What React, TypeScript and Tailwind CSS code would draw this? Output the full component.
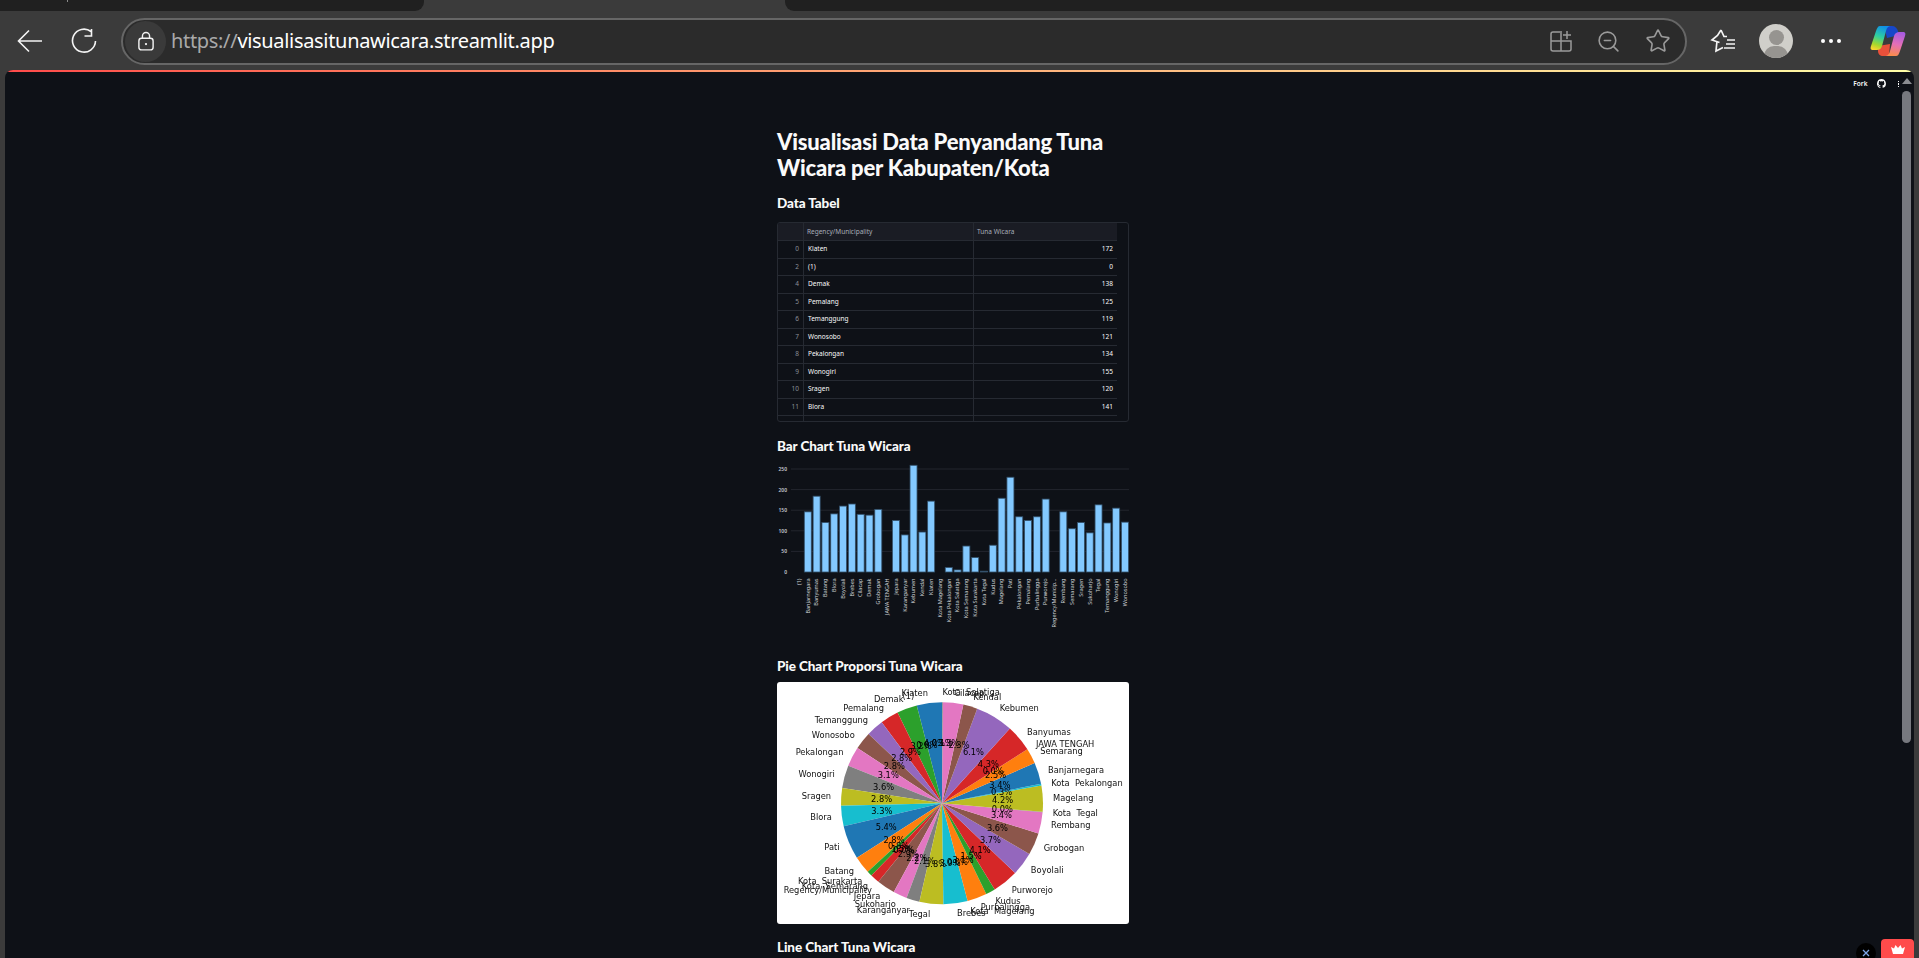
import { Star, ZoomOut } from 'lucide-react';

// [label, value] in the order the pie runs, counter-clockwise from the top
const pieData: [string, number][] = [
  ['Klaten', 172], ['(1)', 0], ['Demak', 138], ['Pemalang', 125], ['Temanggung', 119], ['Wonosobo', 121],
  ['Pekalongan', 134], ['Wonogiri', 155], ['Sragen', 120], ['Blora', 141], ['Pati', 230], ['Batang', 120],
  ['Kota  Surakarta', 35], ['Kota  Semarang', 63], ['Regency/Municipality', 0], ['Jepara', 125], ['Sukoharjo', 95],
  ['Karanganyar', 90], ['Tegal', 163], ['Brebes', 165], ['Kota  Magelang', 0], ['Purbalingga', 134], ['Kudus', 65],
  ['Purworejo', 177], ['Boyolali', 160], ['Grobogan', 152], ['Rembang', 146], ['Kota  Tegal', 2], ['Magelang', 179],
  ['Kota  Pekalongan', 11], ['Banjarnegara', 146], ['Semarang', 105], ['JAWA TENGAH', 0], ['Banyumas', 184],
  ['Kebumen', 259], ['Kendal', 97], ['Cilacap', 140], ['Kota  Salatiga', 5],
];

const tab10 = ['#1f77b4', '#ff7f0e', '#2ca02c', '#d62728', '#9467bd', '#8c564b', '#e377c2', '#7f7f7f', '#bcbd22', '#17becf'];

const barData: [string, number][] = [
  ['(1)', 0], ['Banjarnegara', 146], ['Banyumas', 184], ['Batang', 120], ['Blora', 141], ['Boyolali', 160],
  ['Brebes', 165], ['Cilacap', 140], ['Demak', 138], ['Grobogan', 152], ['JAWA TENGAH', 0], ['Jepara', 125],
  ['Karanganyar', 90], ['Kebumen', 259], ['Kendal', 97], ['Klaten', 172], ['Kota Magelang', 0], ['Kota Pekalongan', 11],
  ['Kota Salatiga', 5], ['Kota Semarang', 63], ['Kota Surakarta', 35], ['Kota Tegal', 2], ['Kudus', 65], ['Magelang', 179],
  ['Pati', 230], ['Pekalongan', 134], ['Pemalang', 125], ['Purbalingga', 134], ['Purworejo', 177], ['Regency/Municip...', 0],
  ['Rembang', 146], ['Semarang', 105], ['Sragen', 120], ['Sukoharjo', 95], ['Tegal', 163], ['Temanggung', 119],
  ['Wonogiri', 155], ['Wonosobo', 121],
];

const rows: [number, string, number][] = [
  [0, 'Klaten', 172], [2, '(1)', 0], [4, 'Demak', 138], [5, 'Pemalang', 125], [6, 'Temanggung', 119],
  [7, 'Wonosobo', 121], [8, 'Pekalongan', 134], [9, 'Wonogiri', 155], [10, 'Sragen', 120], [11, 'Blora', 141],
];

function PieChart() {
  const cx = 165;
  const cy = 121.3;
  const r = 101;
  const total = pieData.reduce((s, d) => s + d[1], 0);
  let angle = 90;
  const slices = pieData.map(([label, v], i) => {
    const sweep = (v / total) * 360;
    const a0 = (angle * Math.PI) / 180;
    const a1 = ((angle + sweep) * Math.PI) / 180;
    const mid = (a0 + a1) / 2;
    angle += sweep;
    const large = sweep > 180 ? 1 : 0;
    const d = `M${cx} ${cy}L${cx + r * Math.cos(a0)} ${cy - r * Math.sin(a0)}A${r} ${r} 0 ${large} 0 ${cx + r * Math.cos(a1)} ${cy - r * Math.sin(a1)}Z`;
    return { label, d, mid, color: tab10[i % 10], pct: `${((v / total) * 100).toFixed(1)}%` };
  });
  return (
    <svg width="352" height="242" className="block blur-[0.35px]" fontFamily="'DejaVu Sans', sans-serif" fontSize="8.3">
      {slices.map((s) => (
        <path key={s.label} d={s.d} fill={s.color} />
      ))}
      {slices.map((s) => (
        <text
          key={s.label}
          x={cx + 1.1 * r * Math.cos(s.mid)}
          y={cy - 1.1 * r * Math.sin(s.mid)}
          textAnchor={Math.cos(s.mid) > 0 ? 'start' : 'end'}
          dominantBaseline="central"
          fill="#111111"
          className="whitespace-pre"
        >
          {s.label}
        </text>
      ))}
      {slices.map((s) => (
        <text
          key={s.label + 'pct'}
          x={cx + 0.6 * r * Math.cos(s.mid)}
          y={cy - 0.6 * r * Math.sin(s.mid)}
          textAnchor="middle"
          dominantBaseline="central"
          fill="#000000"
        >
          {s.pct}
        </text>
      ))}
    </svg>
  );
}

function BarChart() {
  const base = 114;
  const unit = 0.412;
  return (
    <svg width="353" height="170" className="block" fontFamily="'Noto Sans', sans-serif">
      {[0, 50, 100, 150, 200, 250].map((t) => (
        <g key={t}>
          {t > 0 && <line x1="14" x2="352" y1={base - t * unit} y2={base - t * unit} stroke="#23262e" strokeWidth="1" />}
          <text x="10" y={base - t * unit} textAnchor="end" dominantBaseline="central" fontSize="5" fontWeight="600" fill="#c4c6cb">
            {t}
          </text>
        </g>
      ))}
      {barData.map(([label, v], i) => {
        const x = 22 + i * 8.81;
        return (
          <g key={label}>
            {v > 0 && (
              <rect x={x - 3.5} y={base - v * unit} width="7" height={v * unit} fill="#83c9ff" stroke="#33506a" strokeWidth="0.8" />
            )}
            <text
              transform={`translate(${x + 1.8} ${base + 6.5}) rotate(-90)`}
              textAnchor="end"
              fontSize="5.5"
              fill="#cfd1d6"
            >
              {label}
            </text>
          </g>
        );
      })}
    </svg>
  );
}

function DataTable() {
  return (
    <div className="h-[200px] w-[352px] overflow-hidden rounded-[3px] border border-[#262a32] text-[6.5px] text-[#fafafa]">
      <div className="flex h-[18px] w-[339px] border-b border-[#262a32] bg-[#1a1c24] text-[#a8adb8]">
        <div className="w-[26px] border-r border-[#262a32]" />
        <div className="flex w-[170px] items-center border-r border-[#262a32] pl-[3px]">Regency/Municipality</div>
        <div className="flex w-[143px] items-center pl-[3px]">Tuna Wicara</div>
      </div>
      {rows.map(([idx, name, value]) => (
        <div key={idx} className="flex h-[17.5px] w-[339px] border-b border-[#262a32]">
          <div className="flex w-[26px] items-center justify-end border-r border-[#262a32] pr-[4px] text-[#8b8f98]">{idx}</div>
          <div className="flex w-[170px] items-center border-r border-[#262a32] pl-[4px]">{name}</div>
          <div className="flex w-[143px] items-center justify-end pr-[4px]">{value}</div>
        </div>
      ))}
      <div className="flex h-[6px] w-[339px]">
        <div className="w-[26px] border-r border-[#262a32]" />
        <div className="w-[170px] border-r border-[#262a32]" />
      </div>
    </div>
  );
}

function Copilot() {
  return (
    <svg width="36" height="34" viewBox="0 0 36 34">
      <defs>
        <linearGradient id="cpL" x1="0.6" y1="0" x2="0.3" y2="1">
          <stop offset="0" stopColor="#0f8fe8" />
          <stop offset="0.45" stopColor="#2fcfa0" />
          <stop offset="0.8" stopColor="#a6d82c" />
          <stop offset="1" stopColor="#f6d52e" />
        </linearGradient>
        <linearGradient id="cpR" x1="0.6" y1="0" x2="0.4" y2="1">
          <stop offset="0" stopColor="#a85be0" />
          <stop offset="0.5" stopColor="#e56fb8" />
          <stop offset="1" stopColor="#fb8c4a" />
        </linearGradient>
      </defs>
      <path d="M14 2h8c3 0 5 2 6 5l1 4-12 3z" fill="#1747c8" />
      <path d="M8 22l12-2-1 12h-6c-3 0-5-2-5-5z" fill="#e8503a" />
      <path d="M10 2h11c-2 0-4 1-5 5l-4 15c-1 3-3 4-5 4H3c-2 0-3-1-2-4L6 7c1-3 2-5 4-5z" fill="url(#cpL)" />
      <path d="M26 32H15c2 0 4-1 5-5l4-15c1-3 3-4 5-4h4c2 0 3 1 2 4l-5 15c-1 3-2 5-4 5z" fill="url(#cpR)" />
    </svg>
  );
}

export default function App() {
  return (
    <div className="relative flex h-[958px] w-[1919px] flex-col overflow-hidden bg-[#3b3b3b] font-['Noto_Sans',sans-serif]">
      {/* tab strip */}
      <div className="flex h-[11px] justify-between">
        <div className="w-[424px] rounded-br-[9px] bg-[#202020]">
          <div className="ml-[67px] h-[2px] w-[1px] bg-[#8a8a8a]" />
        </div>
        <div className="w-[1134px] rounded-bl-[9px] bg-[#202020]" />
      </div>

      {/* toolbar */}
      <div className="flex h-[59px] items-center pt-[1px]">
        <svg width="26" height="26" viewBox="0 0 26 26" className="ml-[17px]" fill="none" stroke="#f4f4f4" strokeWidth="1.6">
          <path d="M25 13H1.500M12 2.500 1.500 13 12 23.500" />
        </svg>
        <svg width="26" height="26" viewBox="0 0 26 26" className="ml-[28px]" fill="none" stroke="#f4f4f4" strokeWidth="1.6">
          <path d="M20 3.500A11.500 11.500 0 1 0 24.500 13M20.500 1v7h-7" />
        </svg>
        <div className="ml-[24px] flex h-[47px] w-[1566px] items-center rounded-full border-2 border-[#666666] bg-[#2b2b2b]">
          <div className="ml-[2px] flex h-[41px] w-[41px] items-center justify-center rounded-full bg-[#3a3a3a]">
            <svg width="16" height="20" viewBox="0 0 18 22" fill="none" stroke="#f2f2f2" strokeWidth="1.6">
              <rect x="1" y="8" width="16" height="13" rx="3" />
              <path d="M5 8V5.500a4 4 0 0 1 8 0V8" />
              <circle cx="9" cy="14.500" r="1.300" fill="#f2f2f2" stroke="none" />
            </svg>
          </div>
          <span className="ml-[5px] text-[20px] tracking-[-0.32px] text-white">
            <span className="text-[#a9a9a9]">https://</span>visualisasitunawicara.streamlit.app
          </span>
          <div className="ml-auto mr-[14px] flex items-center gap-[24px]">
            <svg width="22" height="22" viewBox="0 0 22 22" fill="none" stroke="#9a9a9a" strokeWidth="1.5">
              <path d="M12 2H3a2 2 0 0 0-2 2v15a2 2 0 0 0 2 2h16a2 2 0 0 0 2-2v-8H1M11 3v18M17 1v8M13 5h8" />
            </svg>
            <ZoomOut size={25} strokeWidth={1.5} color="#9a9a9a" />
            <Star size={26} strokeWidth={1.5} color="#9a9a9a" />
          </div>
        </div>
        <svg width="26" height="26" viewBox="0 0 26 26" className="ml-[23px]" fill="none" stroke="#f4f4f4" strokeWidth="1.7">
          <path d="M11 2l3 6.500h3M9.500 14.500 2 12l5.500-4.500L11 2M7 13l-1 10 7-3.500M17 12h8M16 16h9M14 20h11" />
        </svg>
        <div className="relative ml-[23px] h-[34px] w-[34px] overflow-hidden rounded-full bg-[#d0cfca]">
          <div className="absolute left-[9.500px] top-[6px] h-[15px] w-[15px] rounded-full bg-[#969490]" />
          <div className="absolute left-[5px] top-[22px] h-[20px] w-[24px] rounded-full bg-[#969490]" />
        </div>
        <div className="ml-[28px] flex gap-[4px]">
          <div className="h-[4px] w-[4px] rounded-full bg-white" />
          <div className="h-[4px] w-[4px] rounded-full bg-white" />
          <div className="h-[4px] w-[4px] rounded-full bg-white" />
        </div>
        <div className="ml-[29px]">
          <Copilot />
        </div>
      </div>

      {/* page */}
      <div className="relative ml-[5px] mr-[5px] flex min-h-0 flex-1 flex-col overflow-hidden rounded-t-[8px] bg-[#0e1117]">
        <div className="h-[2px] shrink-0 bg-gradient-to-r from-[#ff4b4b] to-[#ffffa8]" />
        <div className="flex min-h-0 flex-1">
          <main className="flex flex-1 justify-center overflow-hidden pt-[57px] text-[#fafafa]">
            <div className="w-[353px] font-['Lato',sans-serif]">
              <h1 className="text-[22px] font-black leading-[26px] tracking-[-0.2px]">Visualisasi Data Penyandang Tuna Wicara per Kabupaten/Kota</h1>
              <h3 className="mt-[12px] text-[13.5px] font-black leading-[20px] tracking-[-0.1px]">Data Tabel</h3>
              <div className="mt-[9px] font-['Noto_Sans',sans-serif]">
                <DataTable />
              </div>
              <h3 className="mt-[14px] text-[13.5px] font-black leading-[20px] tracking-[-0.1px]">Bar Chart Tuna Wicara</h3>
              <div className="mt-[2px]">
                <BarChart />
              </div>
              <h3 className="mt-[28px] text-[13.5px] font-black leading-[20px] tracking-[-0.1px]">Pie Chart Proporsi Tuna Wicara</h3>
              <div className="mt-[6px] h-[242px] w-[352px] overflow-hidden rounded-[3px] bg-white">
                <PieChart />
              </div>
              <h3 className="mt-[13px] text-[13.5px] font-black leading-[20px] tracking-[-0.1px]">Line Chart Tuna Wicara</h3>
            </div>
          </main>
          {/* scrollbar */}
          <div className="mr-[3px] flex w-[9px] shrink-0 flex-col items-center">
            <div className="mt-[6px] h-0 w-0 border-x-[5px] border-b-[6px] border-x-transparent border-b-[#8a8c91]" />
            <div className="mt-[7px] h-[652px] w-[9px] rounded-full bg-[#77797f]" />
          </div>
        </div>

        {/* streamlit toolbar */}
        <div className="absolute right-[15px] top-[9px] flex items-center text-[6.5px] font-semibold text-[#fafafa]">
          <span>Fork</span>
          <svg width="9" height="9" viewBox="0 0 16 16" fill="#fafafa" className="ml-[9px]">
            <path d="M8 .2a8 8 0 0 0-2.500 15.600c.4.1.5-.2.5-.4v-1.400c-2.200.5-2.700-1-2.700-1-.4-.9-.9-1.200-.9-1.200-.7-.5.1-.5.1-.5.8.1 1.200.8 1.200.8.7 1.200 1.900.9 2.300.7.1-.5.3-.9.5-1.100-1.800-.2-3.600-.9-3.600-4 0-.9.3-1.600.8-2.100-.1-.2-.4-1 .1-2.100 0 0 .7-.2 2.200.8a7.600 7.600 0 0 1 4 0c1.500-1 2.200-.8 2.200-.8.400 1.100.200 1.900.100 2.100.500.600.800 1.300.800 2.100 0 3.100-1.900 3.700-3.700 3.900.300.300.600.800.600 1.500v2.200c0 .200.100.500.600.400A8 8 0 0 0 8 .2z" />
          </svg>
          <div className="ml-[12px] flex flex-col gap-[1px]">
            <div className="h-[1.500px] w-[1.500px] bg-[#fafafa]" />
            <div className="h-[1.500px] w-[1.500px] bg-[#fafafa]" />
            <div className="h-[1.500px] w-[1.500px] bg-[#fafafa]" />
          </div>
        </div>

        {/* hosted-by badges */}
        <div className="absolute bottom-[-5px] right-[38px] flex h-[20px] w-[20px] items-center justify-center rounded-full bg-black">
          <svg width="8" height="8" viewBox="0 0 8 8" stroke="#7ea4e8" strokeWidth="1.300">
            <path d="M1 1l6 6M7 1 1 7" />
          </svg>
        </div>
        <div className="absolute bottom-0 right-0 flex h-[19px] w-[33px] items-center justify-center rounded-t-[4px] bg-[#ff4b4b]">
          <svg width="14" height="10" viewBox="0 0 14 10" fill="#fff">
            <path d="M0 3l3 1.500L4.500 1 7 4l2.500-3L11 4.500 14 3l-2 7H2z" />
          </svg>
        </div>
      </div>
    </div>
  );
}
